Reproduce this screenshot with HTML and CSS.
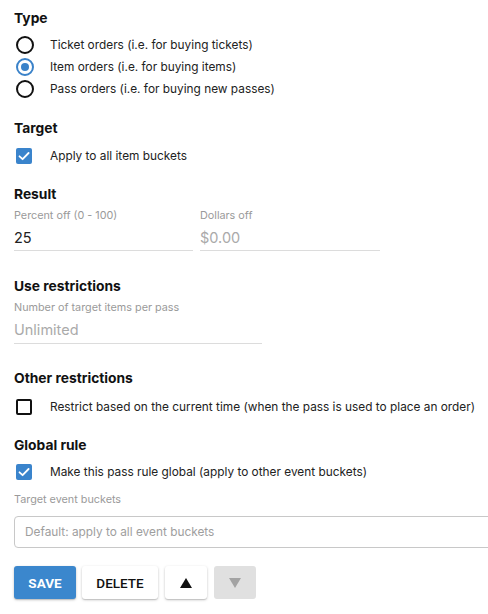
FILE: index.html
```html
<!DOCTYPE html>
<html>
<head>
<meta charset="utf-8">
<link rel="stylesheet" href="styles.css">
</head>
<body>
<div class="form">
  <section class="sec sec-type">
    <h2 class="heading">Type</h2>
    <div class="opt"><span class="radio"></span><span class="opt-label">Ticket orders (i.e. for buying tickets)</span></div>
    <div class="opt"><span class="radio on"></span><span class="opt-label">Item orders (i.e. for buying items)</span></div>
    <div class="opt"><span class="radio"></span><span class="opt-label">Pass orders (i.e. for buying new passes)</span></div>
  </section>

  <section class="sec sec-target">
    <h2 class="heading">Target</h2>
    <div class="opt chk-row"><span class="check on"><svg viewBox="0 0 16 16" width="16" height="16"><path d="M3.5 8.3 L6.6 11.2 L12.6 5" fill="none" stroke="#fff" stroke-width="1.8" stroke-linecap="round" stroke-linejoin="round"/></svg></span><span class="opt-label">Apply to all item buckets</span></div>
  </section>

  <section class="sec sec-result">
    <h2 class="heading">Result</h2>
    <div class="fields">
      <div class="field f-percent">
        <div class="field-label">Percent off (0 - 100)</div>
        <div class="input">25</div>
      </div>
      <div class="field f-dollars">
        <div class="field-label">Dollars off</div>
        <div class="input placeholder">$0.00</div>
      </div>
    </div>
  </section>

  <section class="sec sec-use">
    <h2 class="heading">Use restrictions</h2>
    <div class="field f-use">
      <div class="field-label">Number of target items per pass</div>
      <div class="input placeholder">Unlimited</div>
    </div>
  </section>

  <section class="sec sec-other">
    <h2 class="heading">Other restrictions</h2>
    <div class="opt chk-row"><span class="check"></span><span class="opt-label">Restrict based on the current time (when the pass is used to place an order)</span></div>
  </section>

  <section class="sec sec-global">
    <h2 class="heading">Global rule</h2>
    <div class="opt chk-row"><span class="check on"><svg viewBox="0 0 16 16" width="16" height="16"><path d="M3.5 8.3 L6.6 11.2 L12.6 5" fill="none" stroke="#fff" stroke-width="1.8" stroke-linecap="round" stroke-linejoin="round"/></svg></span><span class="opt-label">Make this pass rule global (apply to other event buckets)</span></div>
    <div class="field-label target-label">Target event buckets</div>
    <div class="select">Default: apply to all event buckets</div>
  </section>

  <div class="actions">
    <button class="btn btn-save">SAVE</button>
    <button class="btn btn-delete">DELETE</button>
    <button class="btn btn-arrow"><svg width="14" height="12" viewBox="0 0 14 12"><path d="M7 1 L13 11 L1 11 Z" fill="#111"/></svg></button>
    <button class="btn btn-arrow disabled"><svg width="14" height="12" viewBox="0 0 14 12"><path d="M1 1 L13 1 L7 11 Z" fill="#a3a3a3"/></svg></button>
  </div>
</div>
</body>
</html>
```

FILE: styles.css
```css
html, body {
  margin: 0;
  padding: 0;
  background: #fff;
  overflow: hidden;
}
body {
  font-family: Inter, "Liberation Sans", sans-serif;
  color: #222;
  width: 488px;
  height: 614px;
}
.form {
  padding: 8px 0 0 14px;
}
.sec {
  margin: 0;
}
.heading {
  margin: 0;
  font-size: 13.8px;
  font-weight: 700;
  line-height: 20px;
  height: 20px;
  color: #111;
}
.opt {
  display: flex;
  align-items: center;
  height: 22px;
  white-space: nowrap;
}
.sec-type .heading { margin-bottom: 6px; }
.chk-row { height: 24px; }
.opt-label {
  font-size: 11.85px;
  color: #222;
}
.radio {
  width: 14px;
  height: 14px;
  border: 2px solid #111;
  border-radius: 50%;
  margin-left: 2px;
  position: relative;
  flex: none;
}
.radio.on {
  border-color: #3a82c9;
}
.radio.on::after {
  content: "";
  position: absolute;
  left: 3px;
  top: 3px;
  width: 8px;
  height: 8px;
  border-radius: 50%;
  background: #3a82c9;
}
.radio + .opt-label { margin-left: 16px; }
.check {
  width: 16px;
  height: 16px;
  box-sizing: border-box;
  border: 2px solid #111;
  border-radius: 2px;
  margin-left: 2px;
  flex: none;
  display: flex;
}
.check.on {
  border: none;
  background: #3a84cc;
}
.check + .opt-label { margin-left: 18px; }

.sec-target { margin-top: 18px; }
.sec-target .heading { margin-bottom: 6px; }

.sec-result { margin-top: 16px; }
.fields {
  display: flex;
  gap: 7px;
  margin-top: 5px;
}
.field-label {
  font-size: 10.8px;
  line-height: 14px;
  color: #9a9a9a;
}
.input {
  margin-top: 3px;
  height: 24px;
  line-height: 24px;
  font-size: 14.5px;
  color: #222;
  border-bottom: 1px solid #dcdcdc;
}
.input.placeholder { color: #aaa; }
.f-percent { width: 179px; }
.f-dollars { width: 180px; }

.sec-use { margin-top: 25px; }
.f-use { width: 248px; margin-top: 5px; }
.f-use .input { margin-top: 3px; height: 25px; }

.sec-other { margin-top: 24px; }
.sec-other .heading { margin-bottom: 7px; }

.sec-global { margin-top: 16px; }
.sec-global .heading { margin-bottom: 5px; }
.target-label { margin-top: 9px; }
.select {
  margin-top: 9px;
  width: 490px;
  height: 32px;
  box-sizing: border-box;
  border: 1px solid #c8c8c8;
  border-radius: 4px;
  padding-left: 10px;
  line-height: 30px;
  font-size: 11.85px;
  color: #9e9e9e;
}

.actions {
  display: flex;
  gap: 6px;
  margin-top: 18px;
}
.btn {
  font-family: Roboto, "Liberation Sans", sans-serif;
  height: 33px;
  border: none;
  border-radius: 3px;
  background: #fff;
  box-shadow: 0 1px 3px rgba(0,0,0,0.2), 0 1px 1px rgba(0,0,0,0.12);
  font-size: 13.5px;
  font-weight: 500;
  color: #111;
  padding: 0;
  display: flex;
  align-items: center;
  justify-content: center;
}
.btn-save {
  width: 62px;
  background: #3b87cd;
  color: #fff;
  font-weight: 700;
}
.btn-delete { width: 76px; }
.btn-arrow { width: 42px; margin-left: 1px; }
.btn-arrow.disabled {
  background: #e0e0e0;
  box-shadow: none;
}
```
